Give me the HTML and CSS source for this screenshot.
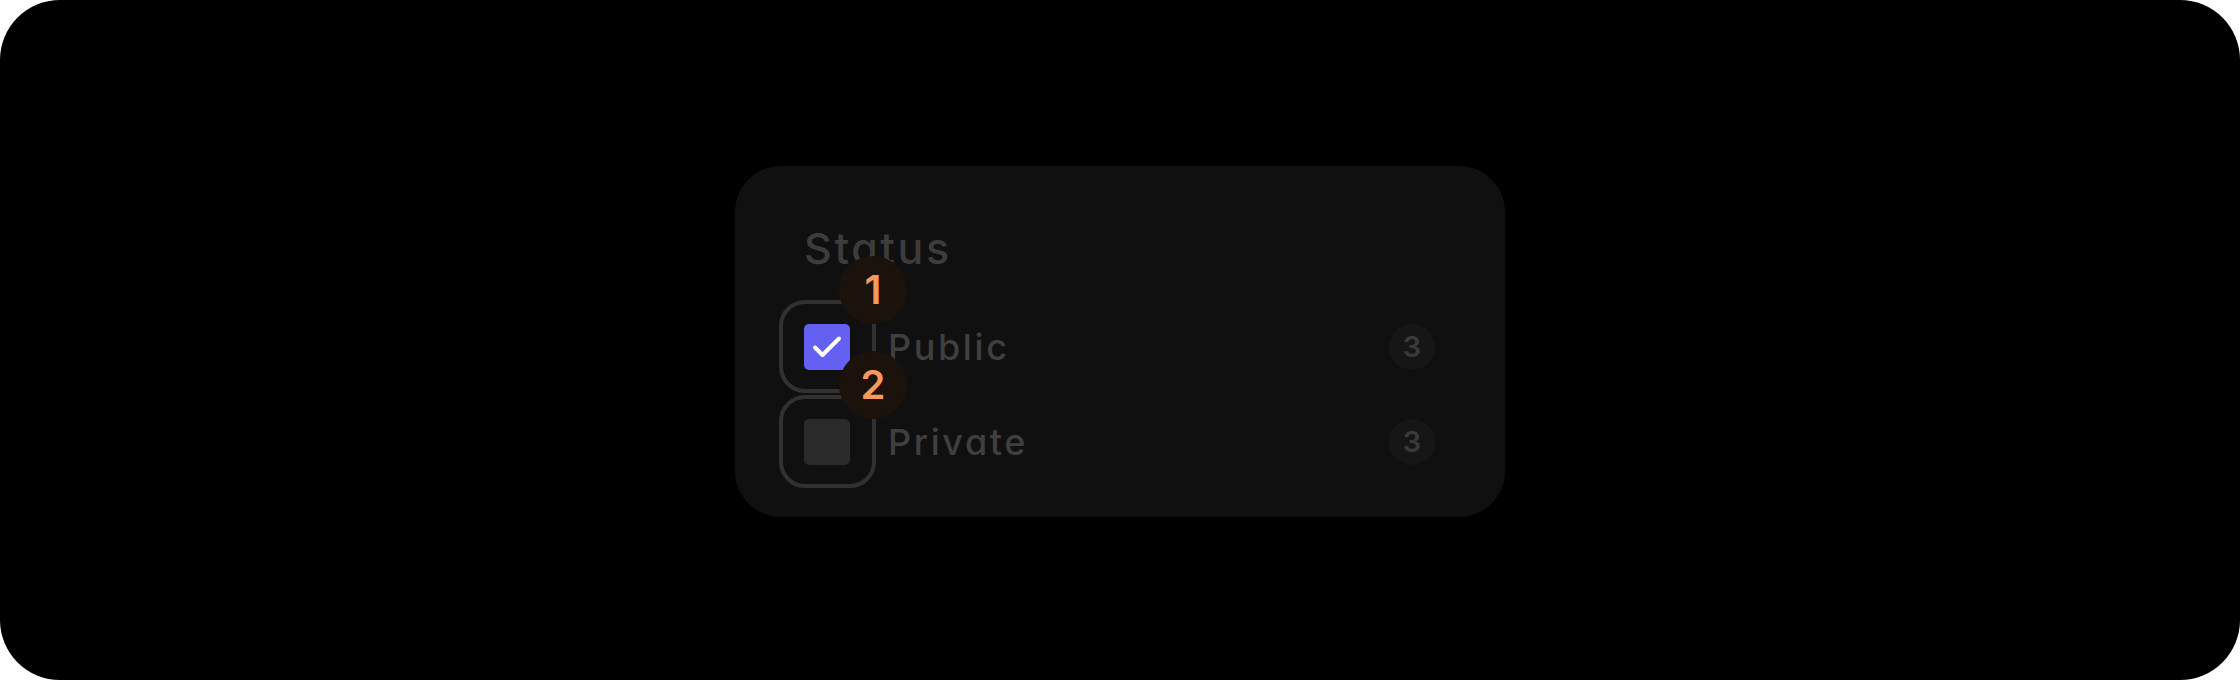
FILE: index.html
```html
<!DOCTYPE html>
<html lang="en">
<head>
<meta charset="utf-8">
<title>Status filter</title>
<link rel="stylesheet" href="styles.css">
</head>
<body>
<div class="frame">
  <section class="card">
    <h2 class="title">Status</h2>
    <div class="rows">
      <div class="row">
        <span class="box-wrap">
          <span class="box checked">
            <svg class="check" viewBox="0 0 46 46" width="46" height="46"><polyline points="11,23.5 18.5,31 35,14.5" /></svg>
          </span>
          <span class="ring"></span>
          <span class="marker">1</span>
        </span>
        <span class="label">Public</span>
        <span class="count">3</span>
      </div>
      <div class="row">
        <span class="box-wrap">
          <span class="box"></span>
          <span class="ring"></span>
          <span class="marker">2</span>
        </span>
        <span class="label">Private</span>
        <span class="count">3</span>
      </div>
    </div>
  </section>
</div>
</body>
</html>
```
FILE: styles.css
```css
html, body {
  margin: 0;
  padding: 0;
  background: #ffffff;
}
body {
  font-family: Inter, "Noto Sans", sans-serif;
  font-feature-settings: "cv11" 1;
}
.frame {
  width: 2240px;
  height: 680px;
  background: #000000;
  border-radius: 60px;
  box-sizing: border-box;
  padding-top: 166px;
  display: flex;
  justify-content: center;
  align-items: flex-start;
}
.card {
  width: 770px;
  box-sizing: border-box;
  background: #101010;
  border-radius: 46px;
  padding: 56px 70px 28px 69px;
}
.title {
  margin: 0 0 25px 0;
  font-size: 43px;
  line-height: 52px;
  font-weight: 500;
  color: #3c3c3c;
  letter-spacing: 2.6px;
}
.rows {
  display: flex;
  flex-direction: column;
}
.row {
  height: 95px;
  display: flex;
  align-items: center;
}
.box-wrap {
  position: relative;
  width: 46px;
  height: 46px;
  flex: none;
}
.box {
  display: block;
  width: 46px;
  height: 46px;
  border-radius: 5px;
  background: #2a2a2a;
}
.box.checked {
  background: #6461f2;
}
.check {
  display: block;
}
.check polyline {
  fill: none;
  stroke: #ffffff;
  stroke-width: 4;
  stroke-linecap: round;
  stroke-linejoin: round;
}
.ring {
  position: absolute;
  left: -25px;
  right: -26px;
  top: -24px;
  bottom: -23px;
  border: 4px solid #313131;
  border-radius: 26px;
}
.marker {
  position: absolute;
  left: 35px;
  top: -68px;
  width: 68px;
  height: 68px;
  border-radius: 50%;
  background: #1c120c;
  color: #f5995e;
  font-size: 40px;
  font-weight: 600;
  line-height: 68px;
  text-align: center;
  z-index: 2;
}
.label {
  flex: 1;
  margin-left: 38px;
  font-size: 36px;
  font-weight: 500;
  color: #3f3f3f;
  letter-spacing: 2.6px;
}
.count {
  flex: none;
  width: 46px;
  height: 46px;
  border-radius: 50%;
  background: #161616;
  color: #3a3a3a;
  font-size: 29px;
  font-weight: 600;
  line-height: 46px;
  text-align: center;
}
```
